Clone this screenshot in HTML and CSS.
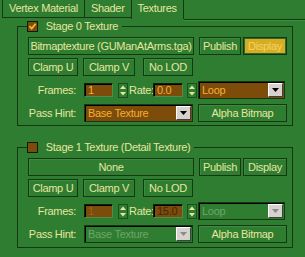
FILE: index.html
```html
<!DOCTYPE html>
<html lang="en">
<head>
	<meta charset="UTF-8">
	<title>Textures</title>
	<link rel="stylesheet" href="styles.css">
</head>
<body>
<ul class="tabs">
	<li>Vertex Material</li>
	<li>Shader</li>
	<li class="active">Textures</li>
</ul>

<fieldset class="stage">
	<legend>
		<svg class="check" width="11" height="11" viewBox="0 0 11 11"><rect x=".5" y=".5" width="10" height="10" fill="#7d4b0a" stroke="#0a1e0a"/><path d="M2.5 5.2l2.2 2.4L8.6 2.8" stroke="#f5b432" stroke-width="1.8" fill="none"/></svg>
		<span>Stage 0 Texture</span>
	</legend>
	<div class="row">
		<button class="btn map">Bitmaptexture (GUManAtArms.tga)</button>
		<button class="btn publish">Publish</button>
		<button class="btn display lit">Display</button>
	</div>
	<div class="row">
		<button class="btn clamp">Clamp U</button>
		<button class="btn clamp mid">Clamp V</button>
		<button class="btn clamp">No LOD</button>
	</div>
	<div class="row wide">
		<span class="lbl">Frames:</span>
		<span class="edit frames">1</span>
		<svg class="spin" width="10" height="15" viewBox="0 0 10 15"><rect x=".5" y=".5" width="9" height="14" fill="none" stroke="#1d4f1d"/><path d="M5 2.5L8 6H2z M5 12.5L8 9H2z" fill="#e6e6a0"/></svg>
		<span class="rate-lbl">Rate:</span>
		<span class="edit rate">0.0</span>
		<svg class="spin" width="10" height="15" viewBox="0 0 10 15"><rect x=".5" y=".5" width="9" height="14" fill="none" stroke="#1d4f1d"/><path d="M5 2.5L8 6H2z M5 12.5L8 9H2z" fill="#e6e6a0"/></svg>
		<span class="combo loop">Loop<i class="drop"><svg width="7" height="4" viewBox="0 0 7 4"><path d="M0 0h7L3.5 4z" fill="#000"/></svg></i></span>
	</div>
	<div class="row wide">
		<span class="lbl">Pass Hint:</span>
		<span class="combo hint">Base Texture<i class="drop"><svg width="7" height="4" viewBox="0 0 7 4"><path d="M0 0h7L3.5 4z" fill="#000"/></svg></i></span>
		<button class="btn alpha">Alpha Bitmap</button>
	</div>
</fieldset>

<fieldset class="stage second">
	<legend>
		<svg class="check" width="11" height="11" viewBox="0 0 11 11"><rect x=".5" y=".5" width="10" height="10" fill="#7d4b0a" stroke="#0a1e0a"/></svg>
		<span>Stage 1 Texture (Detail Texture)</span>
	</legend>
	<div class="row">
		<button class="btn map">None</button>
		<button class="btn publish">Publish</button>
		<button class="btn display">Display</button>
	</div>
	<div class="row">
		<button class="btn clamp">Clamp U</button>
		<button class="btn clamp mid">Clamp V</button>
		<button class="btn clamp">No LOD</button>
	</div>
	<div class="row wide">
		<span class="lbl">Frames:</span>
		<span class="edit frames off">1</span>
		<svg class="spin" width="10" height="15" viewBox="0 0 10 15"><rect x=".5" y=".5" width="9" height="14" fill="none" stroke="#1d4f1d"/><path d="M5 2.5L8 6H2z M5 12.5L8 9H2z" fill="#e6e6a0"/></svg>
		<span class="rate-lbl">Rate:</span>
		<span class="edit rate off">15.0</span>
		<svg class="spin" width="10" height="15" viewBox="0 0 10 15"><rect x=".5" y=".5" width="9" height="14" fill="none" stroke="#1d4f1d"/><path d="M5 2.5L8 6H2z M5 12.5L8 9H2z" fill="#e6e6a0"/></svg>
		<span class="combo loop off">Loop<i class="drop"><svg width="7" height="4" viewBox="0 0 7 4"><path d="M0 0h7L3.5 4z" fill="#8a8a8a"/></svg></i></span>
	</div>
	<div class="row wide">
		<span class="lbl">Pass Hint:</span>
		<span class="combo hint off">Base Texture<i class="drop"><svg width="7" height="4" viewBox="0 0 7 4"><path d="M0 0h7L3.5 4z" fill="#8a8a8a"/></svg></i></span>
		<button class="btn alpha">Alpha Bitmap</button>
	</div>
</fieldset>
</body>
</html>
```

FILE: styles.css
```css
*{margin: 0;padding: 0;box-sizing: border-box}
ul{list-style: none;}
body{
	width: 305px;
	height: 257px;
	overflow: hidden;
	background: #2f7d30;
	color: #e6e6a0;
	font: 11px/14px "Liberation Sans", Arial, sans-serif;
	letter-spacing: -0.3px;
}

/* tab strip */
.tabs{
	display: flex;
	height: 19px;
	padding-left: 2px;
}
.tabs li{
	height: 18px;
	line-height: 17px;
	padding: 0 6px;
	border-left: 1px solid #143714;
	border-bottom: 1px solid #143714;
}
.tabs li.active{
	height: 19px;
	border-right: 1px solid #143714;
	border-bottom: none;
}
.tabs:after{
	content: '';
	flex: 1;
	height: 19px;
	border-bottom: 1px solid #143714;
	box-shadow: 0 1px 0 #3f8f40;
}

/* group boxes */
.stage{
	margin: 0 12px 0 17px;
	border: 1px solid #143714;
	padding: 4px 5px 3px 10px;
}
.stage.second{
	margin-top: 14px;
	padding-bottom: 4px;
}
.stage legend{
	height: 14px;
	line-height: 14px;
	margin-left: -1px;
	padding-right: 4px;
	white-space: nowrap;
}
.check{
	display: inline-block;
	vertical-align: -2px;
	margin-right: 5px;
}

.row{
	display: flex;
	align-items: center;
	height: 18px;
	margin-top: 3px;
}
.row:first-of-type{
	margin-top: 0;
}
.row.wide{
	margin-top: 5px;
}

/* buttons */
.btn{
	height: 18px;
	border: 1px solid #143714;
	background: #2f7d30;
	color: #e6e6a0;
	font: inherit;
	letter-spacing: inherit;
	box-shadow: inset 1px 1px 0 #3d8c3e;
	white-space: nowrap;
}
.map{width: 166px;}
.publish{width: 42px;margin-left: 5px;}
.display{width: 44px;margin-left: 2px;}
.display.lit{
	background: #d8ab22;
	color: #f3d563;
	box-shadow: inset 0 0 0 1px #2a6a2a;
}
.clamp{width: 50px;}
.clamp.mid{
	width: 52px;
	margin: 0 8px 0 5px;
}
.alpha{
	width: 89px;
	margin-left: auto;
}

/* labels and edits */
.lbl{
	width: 50px;
	padding-right: 2px;
	margin-right: 6px;
	text-align: right;
}
.edit{
	height: 14px;
	line-height: 12px;
	padding-left: 3px;
	background: #7d4b0a;
	color: #f5af32;
	border: 1px solid #4c8c4c;
	border-top-color: #0c240c;
	border-left-color: #0c240c;
	box-shadow: inset 1px 1px 0 #000;
}
.edit.off{
	color: #3c2a0a;
}
.frames.off{
	color: #9a6418;
}
.frames{width: 29px;}
.rate{width: 30px;}
.spin{
	margin-left: 4px;
	flex: none;
}
.frames + .spin{
	margin-left: 5px;
}
.rate-lbl{
	margin-left: 1px;
	width: 24px;
}

/* drop-down lists */
.combo{
	display: flex;
	align-items: center;
	height: 18px;
	padding-left: 3px;
	background: #7d4b0a;
	color: #f5af32;
	border: 1px solid #143714;
	box-shadow: inset 1px 1px 0 #000;
}
.combo.off{
	background: #2f7d30;
	color: #6da56d;
}
.loop{
	width: 87px;
	margin: 0 2px 0 auto;
}
.hint{
	width: 109px;
}
.drop{
	display: flex;
	align-items: center;
	justify-content: center;
	width: 15px;
	height: 14px;
	margin-left: auto;
	margin-right: 1px;
	background: #d6d3ce;
	border: 1px solid;
	border-color: #fff #404040 #404040 #fff;
}
```
